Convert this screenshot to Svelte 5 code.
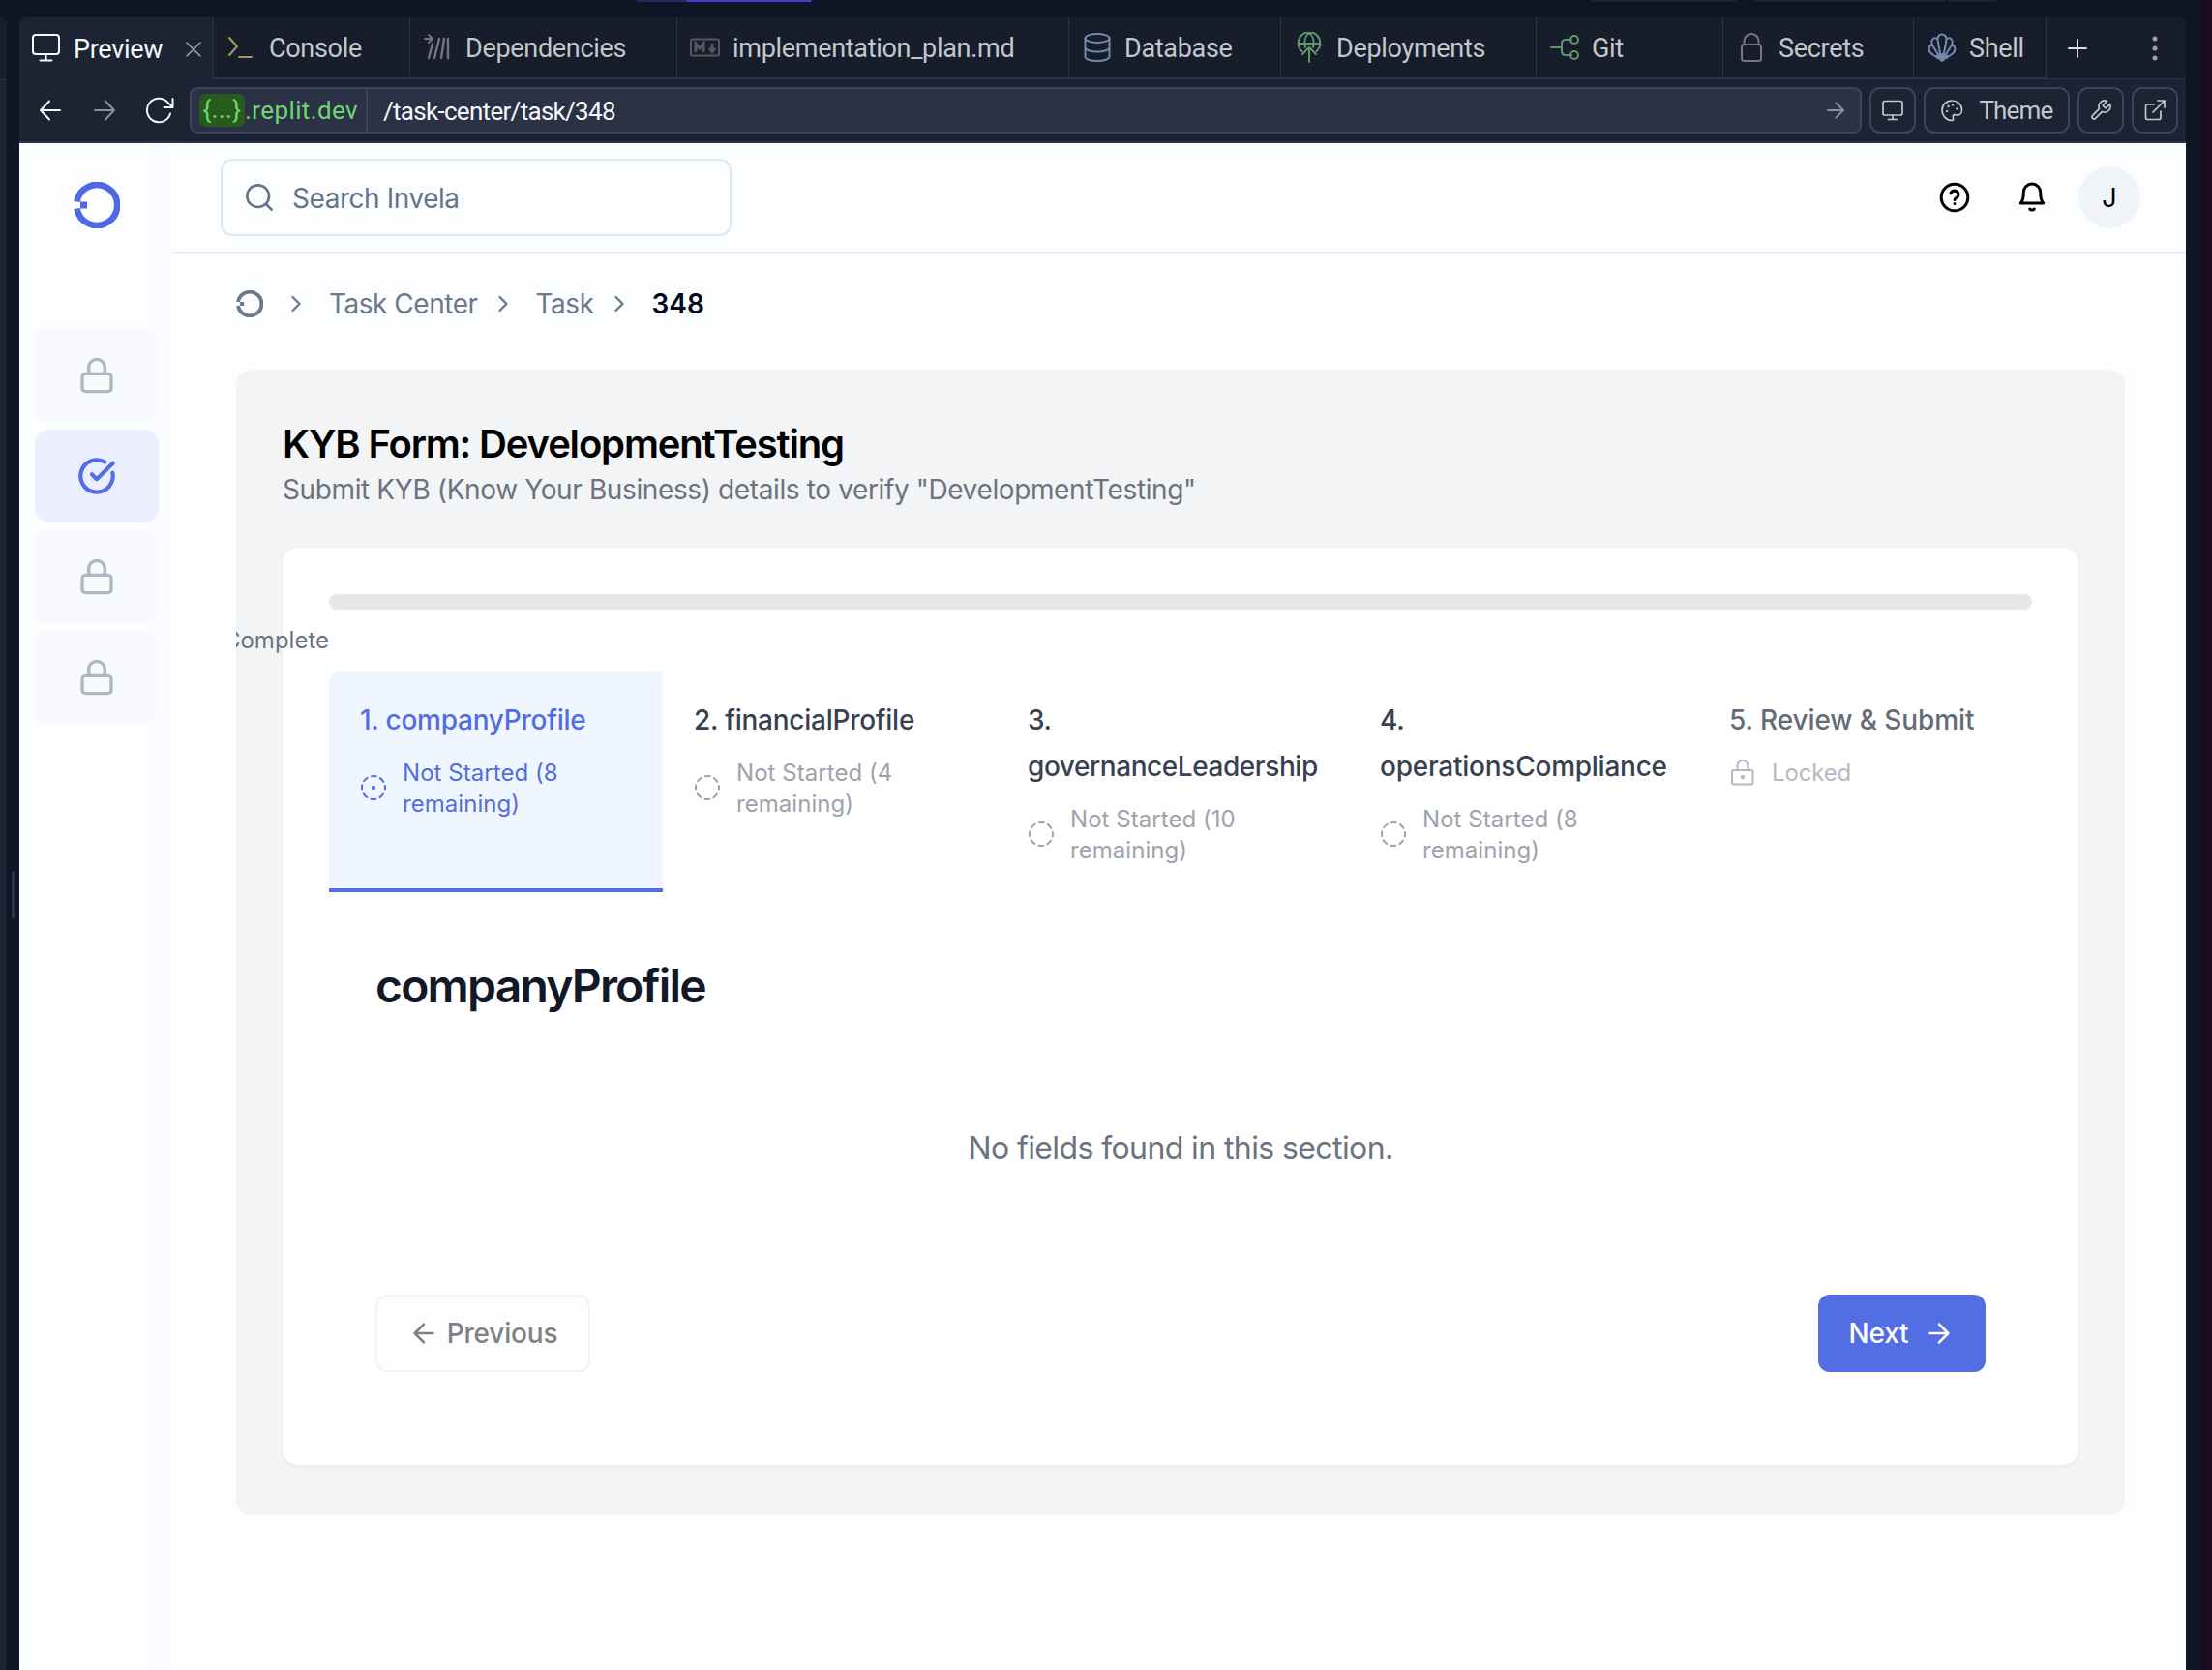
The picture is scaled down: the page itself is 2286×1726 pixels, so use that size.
<script>
  const tabs = [
    { name: 'Console', icon: 'console', width: 203 },
    { name: 'Dependencies', icon: 'deps', width: 276 },
    { name: 'implementation_plan.md', icon: 'markdown', width: 405 },
    { name: 'Database', icon: 'database', width: 219 },
    { name: 'Deployments', icon: 'deploy', width: 264 },
    { name: 'Git', icon: 'git', width: 193 },
    { name: 'Secrets', icon: 'secret', width: 197 },
    { name: 'Shell', icon: 'shell', width: 137 }
  ];
  const nav = ['lock', 'check', 'lock', 'lock'];
  const steps = [
    { title: '1. companyProfile', status: 'Not Started (8 remaining)', state: 'active' },
    { title: '2. financialProfile', status: 'Not Started (4 remaining)', state: 'idle' },
    { title: '3. governanceLeadership', status: 'Not Started (10 remaining)', state: 'idle' },
    { title: '4. operationsCompliance', status: 'Not Started (8 remaining)', state: 'idle' },
    { title: '5. Review & Submit', status: 'Locked', state: 'locked' }
  ];
</script>

{#snippet brand(size)}
  <svg class="brand" width={size} height={size} viewBox="0 0 48 48">
    <path d="M3.500 20.500A21 21 0 1 1 3.500 27.500" fill="none" stroke="currentColor" stroke-width="6.600" />
    <path d="M7 20.500h7v7H7z" fill="currentColor" stroke="none" />
  </svg>
{/snippet}

{#snippet chevron()}
  <svg class="chevron" width="28" height="28" viewBox="0 0 24 24"><path d="m9 18 6-6-6-6" /></svg>
{/snippet}

{#snippet tabIcon(kind)}
  <svg class="tab-icon {kind}" width="32" height="32" viewBox="0 0 32 32">
    {#if kind === 'console'}
      <path d="m3 6 8 9-8 9M13 26h13" />
    {:else if kind === 'deps'}
      <path d="M2 7h8M6 3l4 4-4 4" />
      <path d="m10 12-4 15M17 7l-5 20M22 7l-3 20M26 7v20" stroke-width="2.4" />
    {:else if kind === 'markdown'}
      <rect x="1" y="7.500" width="29" height="17" rx="1.500" />
      <path d="M6 21v-9l4 5 4-5v9M23 12v8M20 17l3 3.500 3-3.500" stroke-width="3" />
    {:else if kind === 'database'}
      <ellipse cx="16" cy="6.500" rx="12.500" ry="4.500" />
      <path d="M3.500 6.500v19c0 2.500 5.500 4.500 12.500 4.500s12.500-2 12.500-4.500v-19M3.500 16c0 2.500 5.500 4.500 12.500 4.500s12.500-2 12.500-4.500" />
    {:else if kind === 'deploy'}
      <path d="M8.500 20A11.300 11.300 0 1 1 23.500 20M4.500 12h23M12 16c-1.500-6 0-12 4-15 4 3 5.500 9 4 15M16 31V16M9 23l7-7 7 7" />
    {:else if kind === 'git'}
      <path d="M2 16h11M23 8h-6q-4 0-4 4v8q0 4 4 4h6" />
      <circle cx="26" cy="8" r="4" /><circle cx="26" cy="24" r="4" />
    {:else if kind === 'secret'}
      <rect x="6" y="13" width="20" height="17" rx="2.500" />
      <path d="M8.500 13V9.500a7.500 7.500 0 0 1 15 0V13" />
    {:else if kind === 'shell'}
      <path d="M14.500 25 11.500 8C11 .5 21 .5 20.500 8l-3 17M11.500 7.500C8 4 3.800 8 6 13.500L13 25M20.500 7.500C24 4 28.200 8 26 13.500L19 25M6 13C2 14.500 1.500 19 4.500 22l7 5M26 13c4 1.500 4.500 6 1.500 9l-7 5" />
      <path d="m10 25 6-2 6 2-6 5z" fill="currentColor" />
    {/if}
  </svg>
{/snippet}

<div class="desktop">
  <div class="left-pane"></div>
  <div class="top-strip"><i class="s1"></i><i class="s2"></i><i class="s3"></i><i class="s4"></i><i class="s5"></i></div>
  <div class="right-strip"></div>

  <section class="pane">
    <div class="tabbar">
      <div class="tab current">
        <svg width="32" height="36" viewBox="0 0 32 36"><rect x="2" y="3" width="27" height="20" rx="3" /><path d="M15.500 23v6M9.500 29.500h12" /></svg>
        <span>Preview</span>
        <svg class="close" width="16" height="16" viewBox="0 0 16 16"><path d="m1 1 14 14M15 1 1 15" /></svg>
      </div>
      {#each tabs as tab}
        <div class="tab" style:width="{tab.width}px">
          {@render tabIcon(tab.icon)}
          <span>{tab.name}</span>
        </div>
      {/each}
      <div class="tab-tools">
        <svg class="plus" width="20" height="20" viewBox="0 0 20 20"><path d="M10 1v18M1 10h18" /></svg>
        <svg class="dots" width="6" height="26" viewBox="0 0 6 26"><circle cx="3" cy="3" r="2.500" /><circle cx="3" cy="13" r="2.500" /><circle cx="3" cy="23" r="2.500" /></svg>
      </div>
    </div>

    <div class="toolbar">
      <div class="history">
        <svg width="24" height="24" viewBox="0 0 24 24"><path d="M22 12H2M11 2.500 2 12l9 9.500" /></svg>
        <svg class="dim" width="24" height="24" viewBox="0 0 24 24"><path d="M2 12h20M13 2.500l9 9.500-9 9.500" /></svg>
        <svg width="32" height="28" viewBox="0 0 32 28"><path d="M27 17.500A12.300 12.300 0 1 1 25 6.500L29 10M29.500 2v9h-9" /></svg>
      </div>
      <div class="url">
        <div class="host"><b>{'{...}'}</b><span>.replit.dev</span></div>
        <span class="path">/task-center/task/348</span>
        <svg class="go" width="18" height="18" viewBox="0 0 18 18"><path d="M1 9h16M9.500 1.500 17 9l-7.500 7.500" /></svg>
      </div>
      <button class="tool"><svg width="24" height="24" viewBox="0 0 24 24"><rect x="2" y="2.500" width="20" height="14.500" rx="2" /><path d="M12 17v4M7.500 21.500h9" /></svg></button>
      <button class="tool theme">
        <svg width="24" height="24" viewBox="0 0 24 24"><path d="M12 2C6.500 2 2 6.500 2 12s4.500 10.500 10 10.500c1 0 1.700-.8 1.700-1.700 0-1.200-1-2.300-.4-3.300.8-1.600 3.500-.5 5.200-.5C21 17 22.500 14.500 22.500 11.500 22.500 6 17.500 2 12 2" /><g fill="currentColor" stroke-width=".5"><circle cx="7" cy="13" r=".9" /><circle cx="8.500" cy="8" r=".9" /><circle cx="13" cy="6.500" r=".9" /><circle cx="17.500" cy="10.500" r=".9" /></g></svg>
        <span>Theme</span>
      </button>
      <button class="tool"><svg width="24" height="24" viewBox="0 0 24 24"><path d="M14.700 6.300a1 1 0 0 0 0 1.400l1.600 1.600a1 1 0 0 0 1.400 0l3.770-3.770a6 6 0 0 1-7.940 7.940l-6.910 6.910a2.120 2.120 0 0 1-3-3l6.910-6.910a6 6 0 0 1 7.940-7.940z" /></svg></button>
      <button class="tool"><svg width="24" height="24" viewBox="0 0 24 24"><path d="M15 2h7v7M22 2 10 14M18 13v6.500q0 2-2 2H4.500q-2 0-2-2V8q0-2 2-2H11" /></svg></button>
    </div>

    <div class="site">
      <aside>
        <div class="logo">{@render brand(48)}</div>
        <nav>
          {#each nav as item}
            <div class="nav-item" class:selected={item === 'check'}>
              <svg width="40" height="40" viewBox="0 0 24 24">
                {#if item === 'check'}
                  <path d="M21.800 10A10 10 0 1 1 17 3.335" /><path d="m9 11 3 3L22 4" />
                {:else}
                  <rect x="3" y="11" width="18" height="11" rx="2" /><path d="M7 11V7a5 5 0 0 1 10 0v4" />
                {/if}
              </svg>
            </div>
          {/each}
        </nav>
      </aside>

      <main>
        <header>
          <div class="search">
            <svg width="32" height="32" viewBox="0 0 24 24"><circle cx="11" cy="11" r="8.500" /><path d="m21.500 21.500-4.300-4.300" /></svg>
            <span>Search Invela</span>
          </div>
          <div class="account">
            <svg width="36" height="36" viewBox="0 0 24 24"><circle cx="12" cy="12" r="9.200" /><path d="M9.300 9.200a2.800 2.800 0 0 1 5.400.9c0 1.900-2.700 2.400-2.700 3.600M12 16.300h.01" /></svg>
            <svg width="36" height="36" viewBox="0 0 24 24"><path d="M6.200 8.500a5.800 5.800 0 0 1 11.600 0c0 5.500 2 7.500 2 7.500H4.200s2-2 2-7.500M10.500 20a1.900 1.900 0 0 0 3 0" /></svg>
            <div class="avatar">J</div>
          </div>
        </header>

        <div class="crumbs">
          {@render brand(28)}
          {@render chevron()}
          <span>Task Center</span>
          {@render chevron()}
          <span>Task</span>
          {@render chevron()}
          <strong>348</strong>
        </div>

        <article>
          <h1>KYB Form: DevelopmentTesting</h1>
          <p class="lead">Submit KYB (Know Your Business) details to verify "DevelopmentTesting"</p>
          <div class="card">
            <div class="progress"></div>
            <div class="percent"><span>Complete</span></div>
            <div class="steps">
              {#each steps as step}
                <div class="step {step.state}">
                  <h3>{step.title}</h3>
                  <div class="status">
                    {#if step.state === 'locked'}
                      <svg width="28" height="28" viewBox="0 0 28 28"><rect x="3" y="12" width="21.500" height="14.500" rx="1.500" /><path d="M8.500 12V7.500a5.500 5.500 0 0 1 11 0V12" /><circle class="dot" cx="14" cy="19" r="2.200" /></svg>
                    {:else}
                      <svg width="28" height="28" viewBox="0 0 28 28"><circle cx="14" cy="14" r="12" stroke-dasharray="5 4.425" stroke-dashoffset="2.500" />{#if step.state === 'active'}<circle class="dot" cx="14" cy="14" r="2.200" />{/if}</svg>
                    {/if}
                    <span>{step.status}</span>
                  </div>
                </div>
              {/each}
            </div>
            <h2>companyProfile</h2>
            <p class="empty">No fields found in this section.</p>
            <div class="actions">
              <button class="previous"><svg width="32" height="32" viewBox="0 0 24 24"><path d="m12 19-7-7 7-7M19 12H5" /></svg>Previous</button>
              <button class="next">Next<svg width="32" height="32" viewBox="0 0 24 24"><path d="M5 12h14M12 5l7 7-7 7" /></svg></button>
            </div>
          </div>
        </article>
      </main>
    </div>
  </section>
</div>

<style>
  :global(body) { margin: 0; background: #0e1525; }
  * { box-sizing: border-box; }
  h1, h2, h3, p { margin: 0; }
  button { font: inherit; margin: 0; padding: 0; }
  svg { display: block; flex: none; fill: none; stroke: currentColor; stroke-width: 2; stroke-linecap: round; stroke-linejoin: round; }
  .desktop { position: relative; width: 2286px; height: 1726px; overflow: hidden; padding: 18px 27px 0 20px; background: #0e1525; font-family: Inter, sans-serif; }
  .left-pane { position: absolute; left: 0; top: 18px; bottom: 0; width: 7px; background: #1c2333; border-radius: 0 8px 0 0; }
  .left-pane::before { content: ''; position: absolute; inset: 0 0 auto; height: 64px; border-bottom: 1px solid #2b3245; background: #171d2b; border-radius: 0 8px 0 0; }
  .left-pane::after { content: ''; position: absolute; left: 12px; top: 882px; width: 4px; height: 50px; border-radius: 2px; background: #2b3245; }
  .right-strip { position: absolute; right: 0; top: 0; bottom: 0; width: 12px; background: #1a0c1e; }
  .top-strip i { position: absolute; top: 0; height: 2px; background: #1c2333; border-radius: 0 0 4px 4px; }
  .top-strip .s1 { left: 657px; width: 60px; background: #302266; }
  .top-strip .s2 { left: 709px; width: 130px; background: #5138c8; }
  .top-strip .s3 { left: 1644px; width: 151px; }
  .top-strip .s4 { left: 1812px; width: 200px; }
  .top-strip .s5 { left: 2014px; width: 50px; }

  .pane { display: flex; flex-direction: column; height: 1708px; border-radius: 8px 8px 0 0; overflow: hidden; background: #1c2333; }
  .tabbar { display: flex; height: 64px; background: #171d2b; font: 27px/62px Roboto, sans-serif; letter-spacing: -.3px; color: #c2c8cc; }
  .tab { display: flex; align-items: center; flex: none; height: 64px; padding-left: 13px; gap: 12px; border-right: 1px solid #2b3245; border-bottom: 2px solid #2b3245; white-space: nowrap; }
  .tab span { padding-top: 1px; }
  .tab.current { width: 201px; padding-left: 12px; color: #f5f9fc; background: #1c2333; border-bottom: 0; }
  .tab.current span { width: 104px; }
  .tab.current .close { color: #9da2a6; stroke-width: 1.5; }
  .tab.current > svg { margin-top: 2px; }
  .tab-icon.console { color: #a39860; }
  .tab-icon.deps { color: #72777f; stroke-width: 1.8; }
  .tab-icon.markdown { color: #54565c; stroke-linecap: butt; stroke-linejoin: miter; }
  .tab-icon.database, .tab-icon.shell { color: #7389ad; }
  .tab-icon.deploy, .tab-icon.git { color: #60966a; }
  .tab-icon.secret { color: #73777e; }
  .tab-tools { display: flex; flex: 1; align-items: center; justify-content: space-between; padding: 0 29px 0 22px; border-bottom: 1px solid #2b3245; }
  .plus { color: #dce1e5; }
  .dots { fill: #9da2a6; stroke: none; }

  .toolbar { display: flex; align-items: center; gap: 8px; height: 66px; padding: 0 8px; border-bottom: 2px solid #2b3245; color: #f5f9fc; font-family: Roboto, sans-serif; }
  .history { display: flex; align-items: center; width: 160px; padding-left: 12px; gap: 32px; }
  .history .dim { color: #8c9097; }
  .history svg:last-child { margin-left: -3px; }
  .url { display: flex; align-items: center; flex: 1; height: 48px; border: 2px solid #3c445c; border-radius: 8px; background: #2b3245; font-size: 26px; }
  .host { display: flex; align-items: center; align-self: stretch; width: 182px; padding-left: 8px; border-right: 2px solid #3c445c; color: #6fd672; letter-spacing: .4px; white-space: nowrap; }
  .host b { width: 47px; height: 34px; line-height: 32px; border-radius: 7px; background: #275b1e; font-weight: 400; text-align: center; }
  .path { padding: 1px 0 0 16px; letter-spacing: -.7px; }
  .go { margin-left: auto; margin-right: 16px; color: #8c9097; }
  .tool { display: flex; align-items: center; justify-content: center; width: 48px; height: 48px; border: 2px solid #3c445c; border-radius: 11px; background: none; color: #c2c8cc; }
  .tool svg { stroke-width: 1.700; }
  .theme { width: 151px; gap: 16px; font-size: 26px; letter-spacing: -.8px; }

  .site { display: flex; flex: 1; background: #fcfdff; }
  aside { width: 160px; padding: 40px 16px 0; background: linear-gradient(90deg, #fcfdff 132px, #fbfcff 132px); }
  .brand { stroke-linecap: butt; }
  .logo { display: grid; justify-items: center; color: #4f68e5; }
  nav { display: grid; gap: 8px; margin-top: 104px; }
  .nav-item { display: grid; place-items: center; height: 96px; border-radius: 16px; background: #f8f9fd; color: #b0b7c4; }
  .nav-item.selected { background: #ebeefe; color: #526de6; }
  .nav-item.selected svg { stroke-width: 2.500; }
  main { flex: 1; min-width: 0; }
  header { display: flex; align-items: center; justify-content: space-between; height: 114px; padding: 0 47px 0 48px; border-bottom: 2px solid #e2e8ee; }
  .search { display: flex; align-items: center; gap: 18px; width: 528px; height: 80px; padding-left: 22px; border: 2px solid #e2e8ef; border-radius: 12px; color: #64748b; font-size: 28px; letter-spacing: -.45px; }
  .search span { padding-top: 2px; }
  .account { display: flex; align-items: center; gap: 44px; color: #000; }
  .avatar { display: grid; place-items: center; width: 64px; height: 64px; padding-top: 1px; margin-left: -14px; border-radius: 50%; background: #f1f5f9; font-size: 27px; }
  .crumbs { display: flex; align-items: center; height: 104px; padding-left: 64px; color: #6b788e; font-size: 28px; letter-spacing: -.48px; }
  .crumbs .chevron { margin: 0 20px 0 12px; }
  .crumbs .brand { margin-right: 8px; }
  .crumbs strong { color: #020817; font-weight: 600; letter-spacing: 0; }

  article { width: 1952px; height: 1184px; margin: 16px 0 0 64px; padding: 49px 48px 0; border-radius: 16px; overflow: hidden; background: #f3f4f6; }
  h1 { font-size: 40px; line-height: 55px; font-weight: 600; letter-spacing: -1.17px; color: #000; }
  .lead { font-size: 28px; line-height: 40px; letter-spacing: -.38px; color: #6b7280; }
  .card { height: 948px; margin-top: 40px; padding: 48px; border-radius: 16px; background: #fff; box-shadow: 0 2px 4px rgba(0, 0, 0, .05); }
  .progress { height: 16px; border-radius: 8px; background: #e5e7eb; }
  .percent { display: flex; justify-content: flex-end; width: 0; height: 32px; margin-top: 16px; font-size: 24px; line-height: 32px; color: #6b7280; }
  .steps { display: grid; grid-template-columns: 345px 345px 364px 361px 345px; height: 228px; margin-top: 16px; }
  .step { padding: 26px 32px 0; color: #374151; }
  .step h3 { font-size: 28px; line-height: 48px; font-weight: 500; letter-spacing: -.25px; }
  .step:nth-child(3) h3 { letter-spacing: -.43px; }
  .step.active { background: #eff6ff; border-bottom: 4px solid #526de3; border-radius: 12px 0 0 0; color: #526de3; }
  .step.locked h3 { color: #646b78; letter-spacing: -.1px; }
  .status { display: flex; align-items: center; gap: 16px; margin-top: 15px; font-size: 24px; line-height: 32px; letter-spacing: .05px; color: #9ca3af; }
  .status svg { margin-top: -2px; }
  .status span { max-width: 185px; }
  .active .status { color: #526de3; }
  .locked .status { color: #b4b9c4; letter-spacing: -.15px; }
  .status .dot { fill: currentColor; stroke: none; }
  h2 { margin: 65px 0 0 48px; font-size: 48px; line-height: 64px; font-weight: 600; letter-spacing: -1.8px; color: #111827; }
  .empty { margin-top: 112px; font-size: 32px; line-height: 48px; letter-spacing: -.6px; text-align: center; color: #6b7280; }
  .actions { display: flex; justify-content: space-between; margin: 127px 48px 0; font-size: 28px; font-weight: 500; letter-spacing: -.2px; }
  .actions button { display: flex; align-items: center; justify-content: center; height: 80px; border-radius: 12px; letter-spacing: inherit; }
  .previous { width: 222px; gap: 8px; border: 2px solid #f1f3f7; background: #fcfdff; color: #808080; }
  .next { width: 173px; gap: 16px; border: 0; background: #536de2; color: #fff; }
</style>
